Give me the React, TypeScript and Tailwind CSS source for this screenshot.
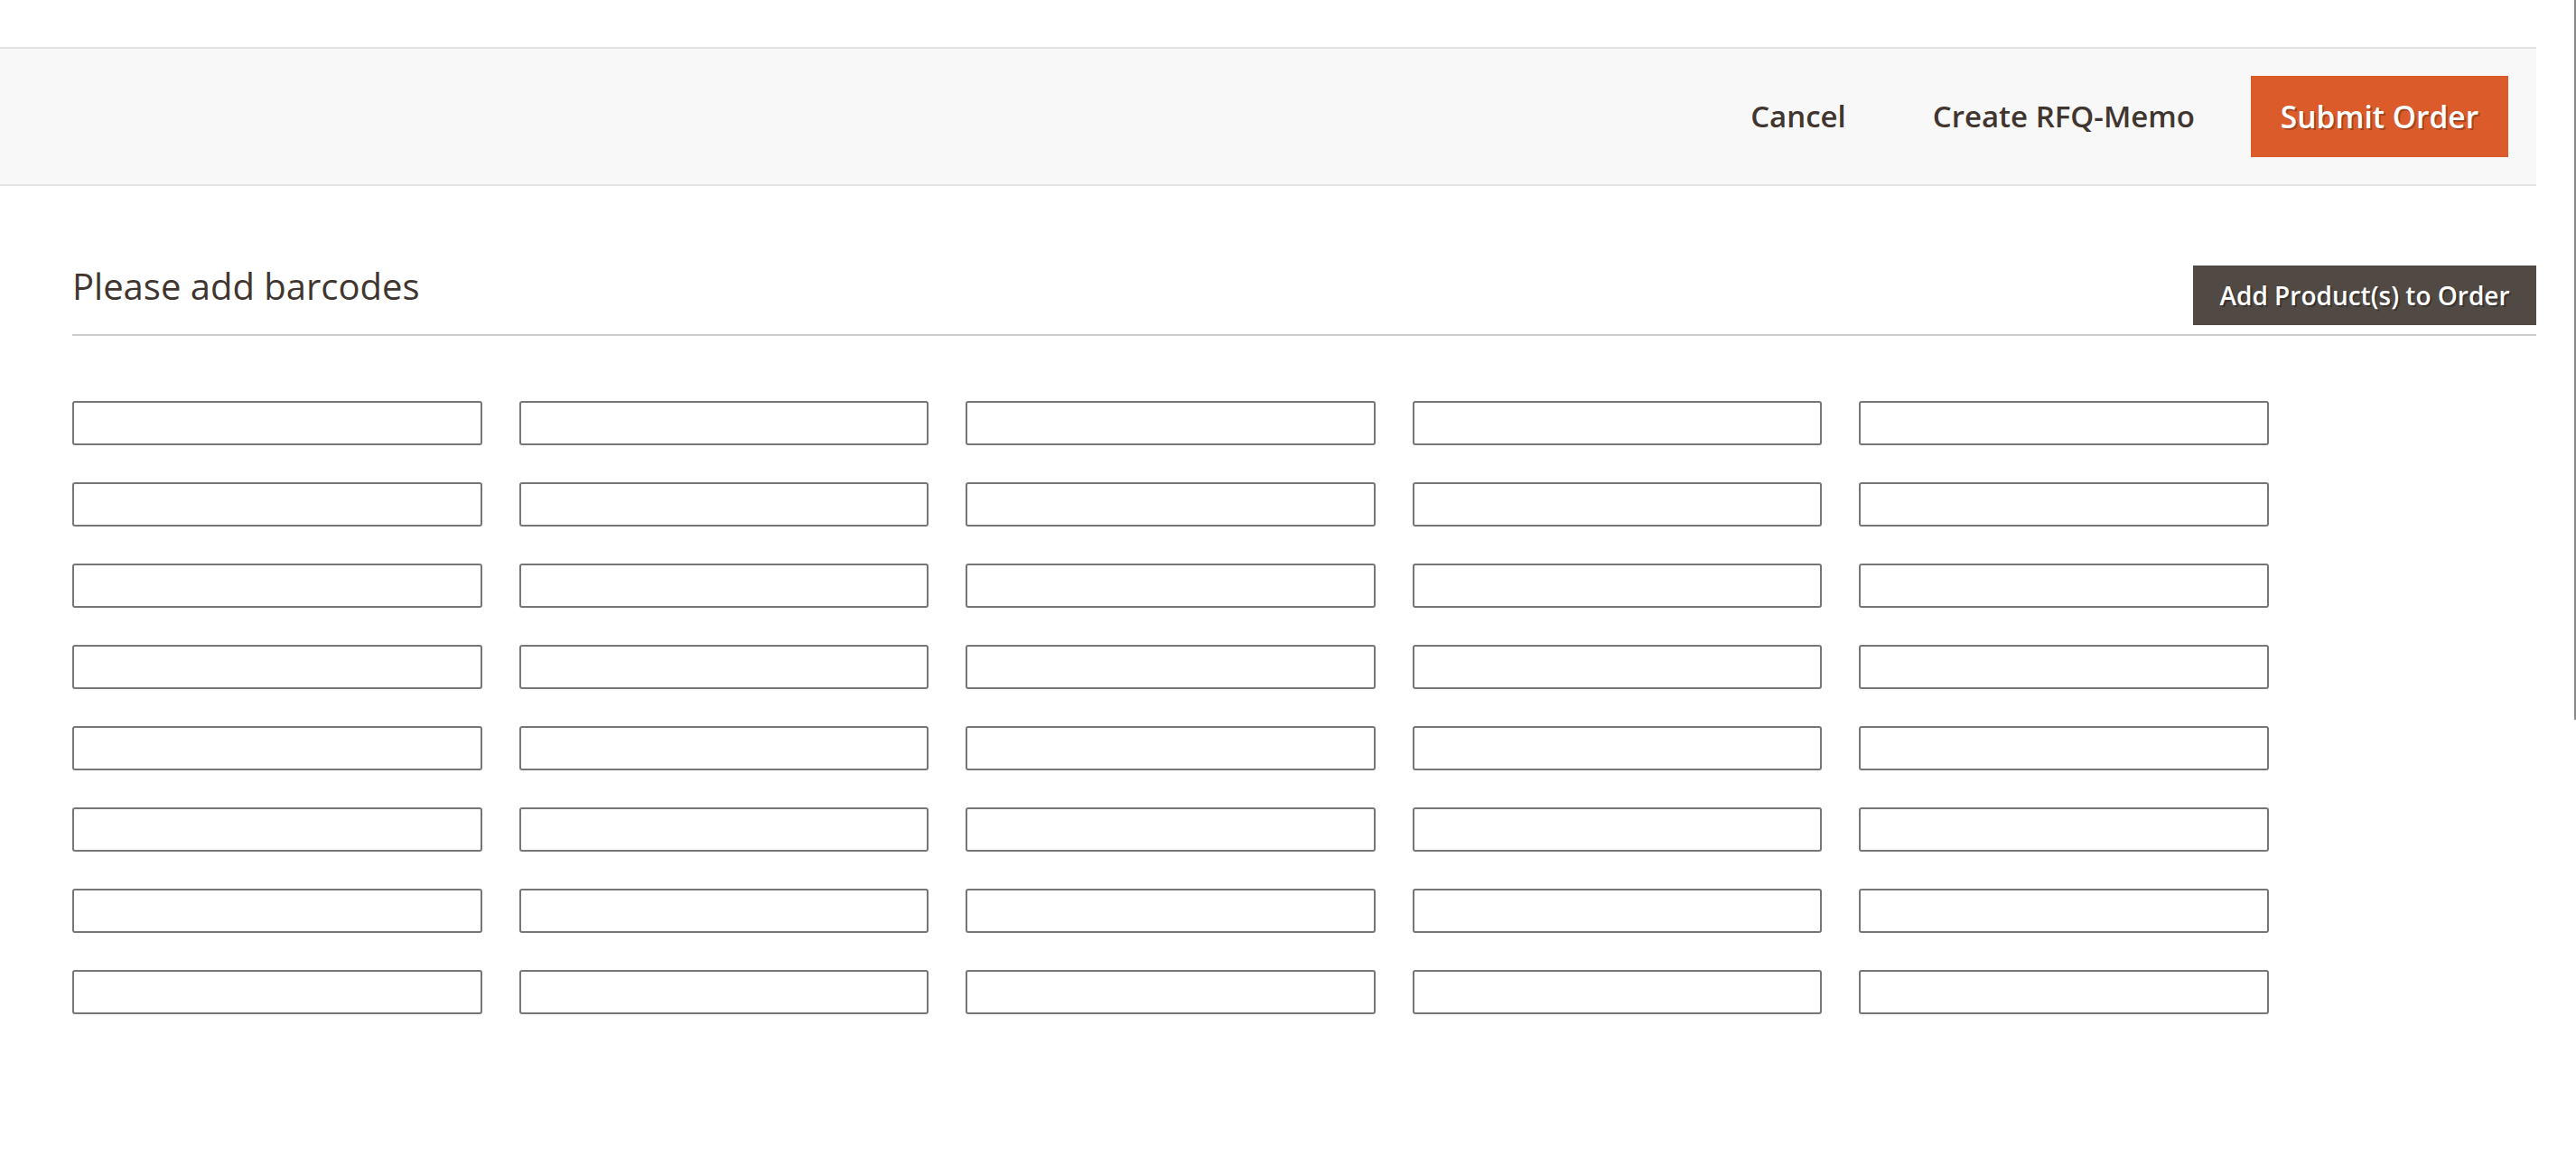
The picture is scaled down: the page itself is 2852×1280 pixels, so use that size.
import React from "react";

const rows = Array.from({ length: 8 });
const cols = Array.from({ length: 5 });

export default function App() {
  return (
    <div
      className="relative min-h-[1280px] bg-white text-[#41362f]"
      style={{ fontFamily: '"Open Sans", "Liberation Sans", sans-serif' }}
    >
      <div className="w-[2808px]">
        <div className="h-[52px]" />
        <div className="flex h-[154px] items-center justify-end border-y-2 border-[#e3e3e3] bg-[#f8f8f8] pr-[31px]">
          <button className="flex h-[90px] items-center px-[34px] text-[33px] font-semibold text-[#41362f]">
            Cancel
          </button>
          <button className="ml-[28px] flex h-[90px] items-center px-[34px] text-[33px] font-semibold text-[#41362f]">
            Create RFQ-Memo
          </button>
          <button className="ml-[28px] flex h-[90px] w-[285px] items-center justify-center bg-[#db5b2a] text-[33.5px] font-semibold text-white [text-shadow:2px_2px_0_rgba(0,0,0,0.25)]">
            Submit Order
          </button>
        </div>
        <div className="pl-[80px]">
          <div className="flex items-start justify-between border-b-2 border-[#cccccc] pt-[88px] pb-[10px]">
            <h2 className="text-[40px] font-normal leading-[45px] text-[#41362f]">
              Please add barcodes
            </h2>
            <button className="flex h-[66px] w-[380px] items-center justify-center bg-[#514943] text-[28px] font-semibold text-white [text-shadow:2px_2px_0_rgba(0,0,0,0.3)]">
              Add Product(s) to Order
            </button>
          </div>
          <div className="mt-[72px] grid grid-cols-[repeat(5,453.5px)] gap-x-[41px] gap-y-[41px]">
            {rows.map((_, r) =>
              cols.map((__, c) => (
                <input
                  key={`${r}-${c}`}
                  type="text"
                  className="h-[49px] w-full rounded-[3px] border-2 border-[#767676] bg-white outline-none"
                />
              ))
            )}
          </div>
        </div>
      </div>
      <div className="absolute right-0 top-0 h-[797px] w-[2px] bg-[#8a8a8a]" />
    </div>
  );
}
